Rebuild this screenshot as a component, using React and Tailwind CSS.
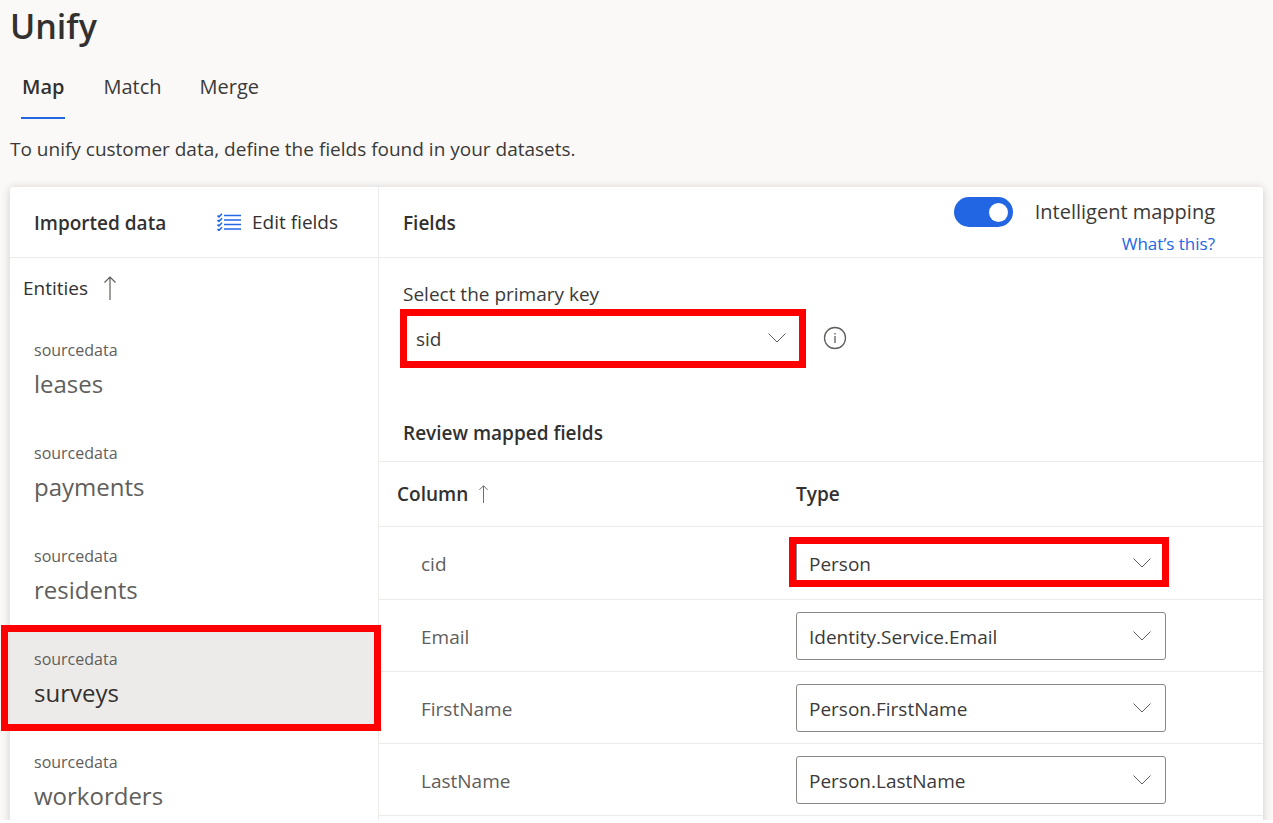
import React from "react";

const entities = ["leases", "payments", "residents", "surveys", "workorders"];

const fields = [
  { name: "cid", type: "Person", marked: true },
  { name: "Email", type: "Identity.Service.Email" },
  { name: "FirstName", type: "Person.FirstName" },
  { name: "LastName", type: "Person.LastName" },
];

function ArrowUp({ className }) {
  return (
    <svg viewBox="0 0 12 24" className={className} fill="none" stroke="currentColor" strokeWidth="1.2" aria-hidden="true">
      <path d="M6 24V1M0.5 6.5L6 1l5.5 5.5" />
    </svg>
  );
}

function Chevron() {
  return (
    <svg
      viewBox="0 0 18 10"
      className="pointer-events-none absolute top-1/2 right-[15px] h-[10px] w-[18px] -translate-y-1/2 text-[#605e5c]"
      fill="none"
      stroke="currentColor"
      aria-hidden="true"
    >
      <path d="M0.5 0.5L9 9l8.5-8.5" />
    </svg>
  );
}

function Dropdown({ id, label, value, options }) {
  return (
    <>
      <select
        id={id}
        aria-label={label}
        defaultValue={value}
        className="h-12 w-full appearance-none rounded-[3px] border border-[#8a8886] bg-white pt-0.5 pr-10 pl-3 text-[19px] text-[#3b3a39]"
      >
        {options.map((o) => (
          <option key={o}>{o}</option>
        ))}
      </select>
      <Chevron />
    </>
  );
}

function ChecklistIcon() {
  return (
    <svg viewBox="0 0 24 18" className="h-[18px] w-6 text-[#2266e3]" fill="none" stroke="currentColor" aria-hidden="true">
      <path strokeWidth="1.6" d="M7 2.500h17M7 7h17M7 11.500h17M7 16h17" />
      <path strokeWidth="1.6" d="M0.500 2.500l1.500 1.300L5 0.800M0.500 7l1.500 1.300L5 5.300M0.500 11.500l1.500 1.300L5 9.800M0.500 16l1.500 1.300L5 14.300" />
    </svg>
  );
}

export default function App() {
  return (
    <div className="h-screen bg-white pb-[3px]">
      <div className="h-full overflow-hidden bg-[#faf9f8] px-2.5 font-['Open_Sans','Noto_Sans',sans-serif] text-[19px] leading-7 text-[#3b3a39]">
        <h1 className="pt-1 text-[34px] leading-[44px] font-semibold text-[#323130]">Unify</h1>

        <nav className="mt-5 flex gap-[38px] pl-[11px] text-xl leading-7">
          <a href="#map" className="border-b-2 border-[#2266e3] px-px pt-[5px] pb-4 font-semibold text-[#323130]">Map</a>
          <a href="#match" className="pt-[5px]">Match</a>
          <a href="#merge" className="pt-[5px]">Merge</a>
        </nav>

        <p className="mt-4">To unify customer data, define the fields found in your datasets.</p>

        <main className="mt-6 flex rounded-t-[3px] bg-white shadow-[0_1px_10px_rgba(0,0,0,0.18)]">
          <aside className="w-[369px] shrink-0 border-r border-[#edebe9]">
            <div className="flex h-[71px] items-center border-b border-[#edebe9] pl-6">
              <h2 className="w-[183px] pt-0.5 font-semibold text-[#323130]">Imported data</h2>
              <button className="flex items-center gap-[11px] text-[#323130]">
                <ChecklistIcon />
                Edit fields
              </button>
            </div>
            <button className="flex h-[60px] items-center gap-4 pl-[13px] text-[#323130]">
              Entities
              <ArrowUp className="h-6 w-3 text-[#605e5c]" />
            </button>
            <ul>
              {entities.map((name) => (
                <li key={name} className="relative">
                  <button
                    className={
                      name === "surveys"
                        ? "block h-[103px] w-full bg-[#edebe9] pl-6 text-left"
                        : "block h-[103px] w-full pl-6 text-left"
                    }
                  >
                    <span className="block text-base leading-7 text-[#605e5c]">sourcedata</span>
                    <span
                      className={
                        name === "surveys"
                          ? "block text-2xl leading-10 text-[#323130]"
                          : "block text-2xl leading-10 text-[#605e5c]"
                      }
                    >
                      {name}
                    </span>
                  </button>
                  {name === "surveys" && (
                    <span className="pointer-events-none absolute -top-0.5 -right-[3px] -bottom-px -left-[9px] border-[7px] border-[#ff0000]" />
                  )}
                </li>
              ))}
            </ul>
          </aside>

          <section className="min-w-0 grow">
            <div className="flex h-[71px] items-center justify-between border-b border-[#edebe9] pr-12 pl-6">
              <h2 className="pt-0.5 font-semibold text-[#323130]">Fields</h2>
              <div className="flex flex-col items-end pt-2.5">
                <label className="flex items-center gap-[22px] text-xl leading-[34px]">
                  <input type="checkbox" role="switch" defaultChecked className="sr-only" />
                  <span className="flex h-[30px] w-[59px] items-center justify-end rounded-full bg-[#2266e3] pr-[5px]">
                    <span className="size-[19px] rounded-full bg-white" />
                  </span>
                  Intelligent mapping
                </label>
                <a href="#help" className="text-[17px] leading-[30px] text-[#2266e3]">What’s this?</a>
              </div>
            </div>

            <div className="pt-[22px] pl-6">
              <label htmlFor="primary-key" className="block">Select the primary key</label>
              <div className="mt-1.5 flex items-center gap-[22px]">
                <div className="relative w-[398px]">
                  <Dropdown id="primary-key" value="sid" options={["sid", "cid"]} />
                  <span className="pointer-events-none absolute -top-[5px] -right-[5px] -bottom-1.5 -left-[3px] border-[7px] border-[#ff0000]" />
                </div>
                <button aria-label="About the primary key" className="text-[#605e5c]">
                  <svg viewBox="0 0 24 24" className="size-6" fill="none" stroke="currentColor" strokeWidth="1.3" aria-hidden="true">
                    <circle cx="12" cy="12" r="10.5" />
                    <path d="M12 10v7M12 7v1.500" />
                  </svg>
                </button>
              </div>
              <h3 className="pt-[57px] pb-3.5 font-semibold text-[#323130]">Review mapped fields</h3>
            </div>

            <table className="w-full table-fixed border-collapse text-left">
              <thead>
                <tr className="h-[65px] border-y border-[#edebe9] text-[#323130]">
                  <th className="w-[417px] pl-[18px] font-semibold">
                    <button className="flex items-center gap-2.5">
                      Column
                      <ArrowUp className="h-[18px] w-[11px] text-[#605e5c]" />
                    </button>
                  </th>
                  <th className="font-semibold">Type</th>
                </tr>
              </thead>
              <tbody>
                {fields.map((f) => (
                  <tr key={f.name} className="h-[72px] border-b border-[#edebe9] first:h-[73px]">
                    <td className="pt-0.5 pl-[42px] text-[#605e5c]">{f.name}</td>
                    <td>
                      <div className="relative w-[370px]">
                        <Dropdown id={"type-" + f.name} label={"Type of " + f.name} value={f.type} options={fields.map((x) => x.type)} />
                        {f.marked && (
                          <span className="pointer-events-none absolute -top-0.5 -right-[3px] bottom-0 -left-[7px] border-[7px] border-[#ff0000]" />
                        )}
                      </div>
                    </td>
                  </tr>
                ))}
              </tbody>
            </table>
          </section>
        </main>
      </div>
    </div>
  );
}
